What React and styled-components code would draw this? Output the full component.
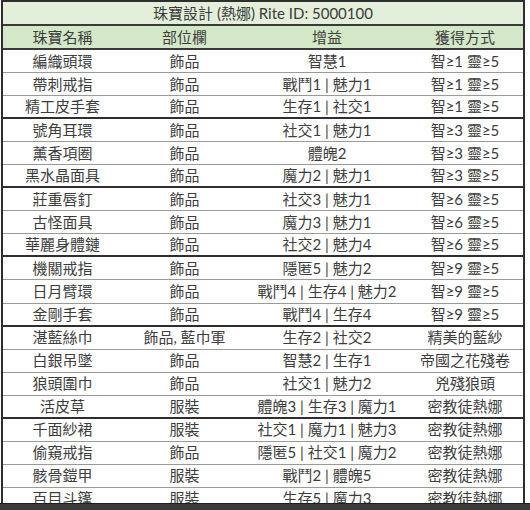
import styled, { createGlobalStyle } from 'styled-components';

const rows = [
  { name: '編織頭環', slot: '飾品', bonus: '智慧1', source: '智≥1 靈≥5' },
  { name: '帶刺戒指', slot: '飾品', bonus: '戰鬥1 | 魅力1', source: '智≥1 靈≥5' },
  { name: '精工皮手套', slot: '飾品', bonus: '生存1 | 社交1', source: '智≥1 靈≥5', end: true },
  { name: '號角耳環', slot: '飾品', bonus: '社交1 | 魅力1', source: '智≥3 靈≥5' },
  { name: '薰香項圈', slot: '飾品', bonus: '體魄2', source: '智≥3 靈≥5' },
  { name: '黑水晶面具', slot: '飾品', bonus: '魔力2 | 魅力1', source: '智≥3 靈≥5', end: true },
  { name: '莊重唇釘', slot: '飾品', bonus: '社交3 | 魅力1', source: '智≥6 靈≥5' },
  { name: '古怪面具', slot: '飾品', bonus: '魔力3 | 魅力1', source: '智≥6 靈≥5' },
  { name: '華麗身體鏈', slot: '飾品', bonus: '社交2 | 魅力4', source: '智≥6 靈≥5', end: true },
  { name: '機關戒指', slot: '飾品', bonus: '隱匿5 | 魅力2', source: '智≥9 靈≥5' },
  { name: '日月臂環', slot: '飾品', bonus: '戰鬥4 | 生存4 | 魅力2', source: '智≥9 靈≥5' },
  { name: '金剛手套', slot: '飾品', bonus: '戰鬥4 | 生存4', source: '智≥9 靈≥5', end: true },
  { name: '湛藍絲巾', slot: '飾品, 藍巾軍', bonus: '生存2 | 社交2', source: '精美的藍紗' },
  { name: '白銀吊墜', slot: '飾品', bonus: '智慧2 | 生存1', source: '帝國之花殘卷' },
  { name: '狼頭圍巾', slot: '飾品', bonus: '社交1 | 魅力2', source: '兇殘狼頭' },
  { name: '活皮草', slot: '服裝', bonus: '體魄3 | 生存3 | 魔力1', source: '密教徒熱娜', end: true },
  { name: '千面紗裙', slot: '服裝', bonus: '社交1 | 魔力1 | 魅力3', source: '密教徒熱娜' },
  { name: '偷窺戒指', slot: '飾品', bonus: '隱匿5 | 社交1 | 魔力2', source: '密教徒熱娜' },
  { name: '骸骨鎧甲', slot: '服裝', bonus: '戰鬥2 | 體魄5', source: '密教徒熱娜' },
  { name: '百目斗篷', slot: '服裝', bonus: '生存5 | 魔力3', source: '密教徒熱娜' },
];

const GlobalStyle = createGlobalStyle`
  body {
    margin: 0;
    background: #ffffff;
    font-family: Lato, "Noto Sans CJK TC", sans-serif;
  }
`;

export default function App() {
  return (
    <>
      <GlobalStyle />
      <Page>
        <Sheet>
          <Title>珠寶設計 (熱娜) Rite ID: 5000100</Title>
          <HeaderRow>
            <Cell>珠寶名稱</Cell>
            <Cell>部位欄</Cell>
            <Cell>增益</Cell>
            <Cell>獲得方式</Cell>
          </HeaderRow>
          {rows.map((row, index) => (
            <Row key={index} end={row.end}>
              <Cell>{row.name}</Cell>
              <Cell>{row.slot}</Cell>
              <Cell>{row.bonus}</Cell>
              <Cell>{row.source}</Cell>
            </Row>
          ))}
        </Sheet>
        <StatusBar />
      </Page>
    </>
  );
}

const Page = styled.div`
  width: 530px;
  height: 510px;
  overflow: hidden;
  display: flex;
  flex-direction: column;
`;

const Sheet = styled.div`
  height: 503px;
  flex: none;
  overflow: hidden;
  width: 524px;
  margin-left: 1px;
  border-left: 2px solid #2e2e2e;
  border-right: 2px solid #2e2e2e;
  border-top: 2px solid #2e2e2e;
  box-sizing: border-box;
  color: #3d3d3d;
  font-size: 15px;
`;

const Title = styled.div`
  height: 22px;
  line-height: 22px;
  background: #e3efda;
  border-bottom: 2px solid #3a3a3a;
  text-align: center;
  color: #3a3a3a;
`;

const Row = styled.div`
  display: grid;
  grid-template-columns: 119px 125px 160px 1fr;
  height: 23.05px;
  box-sizing: border-box;
  border-bottom: ${props => (props.end ? '2px solid #2e2e2e' : '1px solid #9a9a9a')};
`;

const HeaderRow = styled(Row)`
  height: 24px;
  background: #d3e8c7;
  border-bottom: 2px solid #3a3a3a;
`;

const Cell = styled.div`
  display: flex;
  align-items: center;
  justify-content: center;
  white-space: nowrap;
  line-height: 1;
`;

const StatusBar = styled.div`
  flex: 1;
  background: #3b3b3b;
  border-top: 1px solid #1e1e1e;
`;
